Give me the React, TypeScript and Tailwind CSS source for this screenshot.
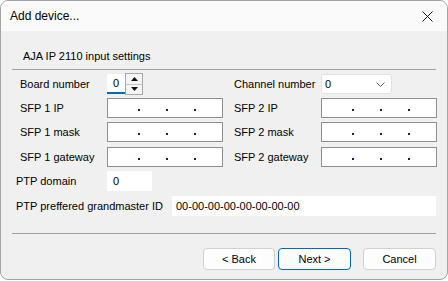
import React from "react";

const font = { fontFamily: '"Liberation Sans", Arial, sans-serif' };

function IpBox() {
  return (
    <div className="w-[116px] h-[20px] bg-white border border-[#8f8f8f] flex items-start pt-[10px]">
      <div className="w-[30px]" />
      <div className="w-[2px] h-[2px] bg-[#1c1c6e]" />
      <div className="w-[26px]" />
      <div className="w-[2px] h-[2px] bg-[#1c1c6e]" />
      <div className="w-[26px]" />
      <div className="w-[2px] h-[2px] bg-[#1c1c6e]" />
    </div>
  );
}

function Label({ children, pl = "pl-[8px]" }: { children: React.ReactNode; pl?: string }) {
  return <div className={`${pl} h-[20px] flex items-center text-[11px] text-black whitespace-nowrap`}>{children}</div>;
}

export default function App() {
  return (
    <div className="w-[448px] h-[281px] bg-white" style={font}>
      <div className="w-[448px] h-[280px] border border-[#a3a3a3] rounded-[8px] overflow-hidden bg-[#f0f0f0] flex flex-col">
        <div className="h-[30px] bg-[#fafafa] flex items-center justify-between pl-[9px] pr-[10px] shrink-0">
          <span className="text-[12px] text-black">Add device...</span>
          <svg width="11" height="11" viewBox="0 0 11 11" className="mr-[4px]">
            <path d="M0.5 0.5 L10.5 10.5 M10.5 0.5 L0.5 10.5" stroke="#1a1a1a" strokeWidth="1" fill="none" />
          </svg>
        </div>
        <div className="flex-1 px-[11px] flex flex-col">
          <div className="mt-[19px] h-[13px] pl-[11px] flex items-center text-[11px] text-black">AJA IP 2110 input settings</div>
          <div className="mt-[6px] h-px bg-[#a0a0a0]" />

          <div className="mt-[4px] grid grid-cols-[95px_116px_11px_87px_115px] h-[20px] items-center">
            <Label>Board number</Label>
            <div className="flex items-center h-[20px]">
              <div className="w-[18px] h-[20px] bg-white border-b-2 border-[#0067c0] flex items-center pl-[6px] text-[11px] text-black">0</div>
              <div className="w-[18px] h-[22px] -my-[1px] border border-[#a8a8a8] bg-[#f4f4f4] flex flex-col">
                <div className="flex-1 flex items-center justify-center border-b border-[#c4c4c4]">
                  <svg width="7" height="4" viewBox="0 0 7 4"><path d="M3.5 0 L7 4 L0 4 Z" fill="#111" /></svg>
                </div>
                <div className="flex-1 flex items-center justify-center">
                  <svg width="7" height="4" viewBox="0 0 7 4"><path d="M0 0 L7 0 L3.5 4 Z" fill="#111" /></svg>
                </div>
              </div>
            </div>
            <div />
            <Label pl="pl-0">Channel number</Label>
            <div className="w-[71px] h-[20px] bg-white border border-[#e2e2e2] rounded-[3px] flex items-center justify-between pl-[3px] pr-[6px] text-[11px] text-black">
              <span>0</span>
              <svg width="9" height="5" viewBox="0 0 9 5"><path d="M0.5 0.5 L4.5 4.5 L8.5 0.5" stroke="#6a6a6a" strokeWidth="1" fill="none" /></svg>
            </div>
          </div>

          {[
            ["SFP 1 IP", "SFP 2 IP", "mt-[4px]"],
            ["SFP 1 mask", "SFP 2 mask", "mt-[4px]"],
            ["SFP 1 gateway", "SFP 2 gateway", "mt-[5px]"],
          ].map(([a, b, mt]) => (
            <div key={a} className={`${mt} grid grid-cols-[95px_116px_11px_87px_115px] h-[20px] items-center`}>
              <Label>{a}</Label>
              <IpBox />
              <div />
              <Label pl="pl-0">{b}</Label>
              <IpBox />
            </div>
          ))}

          <div className="mt-[4px] flex h-[20px] items-center">
            <div className="w-[95px]"><Label pl="pl-[4px]">PTP domain</Label></div>
            <div className="w-[45px] h-[20px] bg-white flex items-center pl-[6px] text-[11px] text-black">0</div>
          </div>

          <div className="mt-[5px] flex h-[20px] items-center">
            <div className="w-[160px]"><Label pl="pl-[4px]">PTP preffered grandmaster ID</Label></div>
            <div className="flex-1 h-[20px] bg-white flex items-center pl-[4px] text-[11px] text-black">00-00-00-00-00-00-00-00</div>
          </div>

          <div className="mt-[17px] h-px bg-[#a0a0a0]" />

          <div className="mt-[14px] flex justify-end">
            <button className="w-[72px] mr-[3px] h-[22px] bg-[#fdfdfd] border border-[#d0d0d0] rounded-[4px] text-[11px] text-black flex items-center justify-center">&lt; Back</button>
            <button className="w-[73px] mr-[12px] h-[22px] bg-[#fdfdfd] border border-[#0067c0] rounded-[4px] text-[11px] text-black flex items-center justify-center">Next &gt;</button>
            <button className="w-[73px] h-[22px] bg-[#fdfdfd] border border-[#d0d0d0] rounded-[4px] text-[11px] text-black flex items-center justify-center">Cancel</button>
          </div>
        </div>
      </div>
    </div>
  );
}
